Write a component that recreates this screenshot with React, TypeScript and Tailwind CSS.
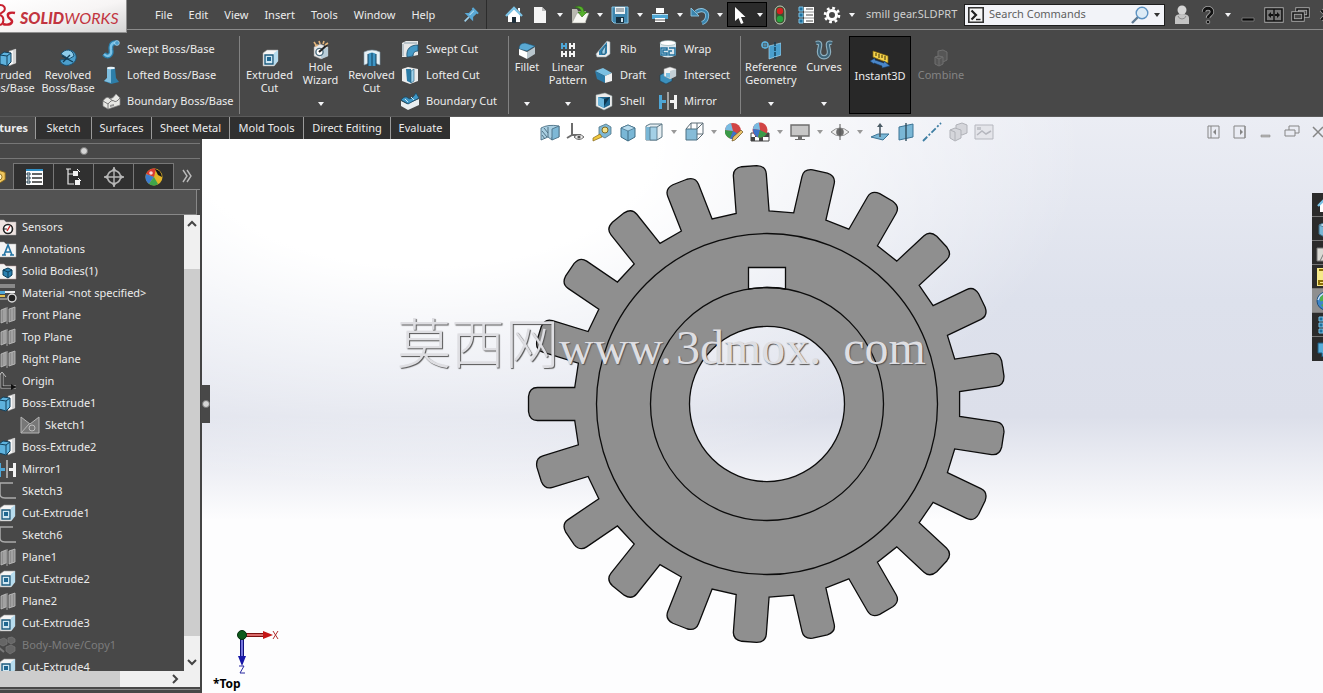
import type { ReactNode } from 'react';

const ICONS: Record<string, ReactNode> = {
  pin: (
    <g transform="rotate(45 10 10)">
      <path d="M6 3h8v2h-1v5l3 3H4l3-3V5H6z" fill="#5aa9d6" />
      <path d="M10 13v6" stroke="#9fd0ea" strokeWidth="1.6" />
      <path d="M9 5v6" stroke="#bfe2f3" />
    </g>
  ),
  home: (
    <>
      <path d="M4 9v8h12V9l-6-5z" fill="#fff" />
      <path d="M2 11l8-8 8 8" fill="none" stroke="#7cc3e6" strokeWidth="2.4" />
      <path d="M8 18v-6h4v6z" fill="#1f2f3a" />
      <path d="M14 3h2v4l-2-2z" fill="#fff" />
    </>
  ),
  page: (
    <>
      <path d="M4 2h8l4 4v12H4z" fill="#f4f4f4" />
      <path d="M12 2v4h4z" fill="#b8b8b8" />
    </>
  ),
  open: (
    <>
      <path d="M2 18V4h5l1 2h8v12z" fill="#b9b9b0" />
      <path d="M2 18l5-10h12l-4 10z" fill="#f7f7f2" stroke="#8d8d85" strokeWidth=".5" />
      <path d="M5 2c5-2 9 0 9 5h3l-5 5-4-5h3c0-3-2-4-6-5z" fill="#56b02c" stroke="#2c6d10" strokeWidth=".6" />
    </>
  ),
  save: (
    <>
      <path d="M2 2h16v16H4l-2-2z" fill="#3f86ae" stroke="#85c3e2" />
      <path d="M5 2h10v7H5z" fill="#eef4f7" />
      <path d="M6 4h8M6 6h8" stroke="#5b6b75" />
      <path d="M6 12h8v6H6z" fill="#17303f" />
      <path d="M11 13h2v4h-2z" fill="#cfe4ee" />
    </>
  ),
  print: (
    <>
      <path d="M6 3h8v5H6z" fill="#fff" />
      <path d="M2 9h16v5H2z" fill="#4fa7d4" />
      <path d="M2 9h16v1H2z" fill="#b7ddf0" />
      <path d="M5 13h10v4H5z" fill="#fff" />
      <path d="M5 15h10" stroke="#555" />
    </>
  ),
  undo: (
    <>
      <path d="M6 7c6-4 12-1 11 5-.4 3-2 5-5 6" fill="none" stroke="#8fc6e2" strokeWidth="4" />
      <path d="M1 3v8h8z" fill="#3c85ad" stroke="#8fc6e2" strokeWidth=".9" />
      <path d="M6 7c6-4 12-1 11 5-.4 3-2 5-5 6" fill="none" stroke="#3c85ad" strokeWidth="2.4" />
    </>
  ),
  cursor: <path d="M5 2v14l3.500-3 2.500 6 2.500-1-2.500-6h4.500z" fill="#fff" />,
  traffic: (
    <>
      <rect x="5" y="1" width="10" height="18" rx="5" fill="#3c5030" stroke="#c3ccb8" />
      <circle cx="10" cy="6" r="3.200" fill="#d42121" />
      <circle cx="10" cy="14" r="3.200" fill="#27a33c" />
    </>
  ),
  options: (
    <>
      <path d="M8 2h10v16H8z" fill="#fff" />
      <path d="M3 2h4v4H3zM3 8h4v4H3zM3 14h4v4H3z" fill="#1f6f9c" stroke="#7cc3e6" />
      <path d="M10 4h7M10 10h7M10 16h7" stroke="#444" />
      <path d="M8 7h10M8 13h10" stroke="#777" strokeWidth=".8" />
    </>
  ),
  gear: (
    <>
      <circle cx="10" cy="10" r="4.500" fill="none" stroke="#fff" strokeWidth="3" />
      <circle cx="10" cy="10" r="7" fill="none" stroke="#fff" strokeWidth="2.600" strokeDasharray="2.750 2.750" />
    </>
  ),
  command: (
    <>
      <path d="M2 2h16v16H2z" fill="#f5f5f5" stroke="#333" strokeWidth="1.800" />
      <path d="M5 5l5 5-5 5" fill="none" stroke="#222" strokeWidth="2.400" />
      <path d="M10 15h5" stroke="#222" strokeWidth="1.600" />
    </>
  ),
  lens: (
    <>
      <path d="M8 12l-6 6" stroke="#5f7a92" strokeWidth="2.400" />
      <circle cx="12" cy="8" r="5.800" fill="#ddebf6" stroke="#5c92c2" strokeWidth="1.400" />
    </>
  ),
  user: (
    <>
      <circle cx="10" cy="5" r="4.500" fill="#d5d5d5" />
      <path d="M3 13q0-4 7-4t7 4v6H3z" fill="#c4c4c4" />
      <path d="M6 11q1 3 4 3t4-3" fill="none" stroke="#8b8b8b" />
    </>
  ),
  help: (
    <>
      <path d="M6 7c0-5 8-5 8 0 0 3-4 3-4 6" fill="none" stroke="#a5a5a5" strokeWidth="4.400" />
      <circle cx="10" cy="17" r="1.800" fill="#111" stroke="#a5a5a5" strokeWidth=".8" />
      <path d="M6 7c0-5 8-5 8 0 0 3-4 3-4 6" fill="none" stroke="#111" strokeWidth="2.800" />
    </>
  ),
  minimize: <path d="M4 13h12v3H4z" fill="#050505" stroke="#8d8d8d" strokeWidth=".7" />,
  span: (
    <>
      <path d="M2 4h16v12H2z" fill="none" stroke="#a8a8a8" strokeWidth="3.400" />
      <path d="M2 4h16v12H2z" fill="#777" stroke="#111" strokeWidth="1.600" />
      <path d="M10 4v12" stroke="#111" strokeWidth="1.400" />
      <path d="M4 10l3-3v2h2v2H7v2zM16 10l-3-3v2h-2v2h2v2z" fill="#111" />
    </>
  ),
  restore: (
    <>
      <path d="M7 4h11v7H7z" fill="#484848" stroke="#a8a8a8" strokeWidth="3.400" />
      <path d="M7 4h11v7H7z" fill="none" stroke="#111" strokeWidth="1.600" />
      <path d="M3 8h10v7H3z" fill="#484848" stroke="#a8a8a8" strokeWidth="3.400" />
      <path d="M3 8h10v7H3z" fill="none" stroke="#111" strokeWidth="1.600" />
    </>
  ),
  close: (
    <>
      <path d="M5 5l10 10M15 5L5 15" stroke="#a0a0a0" strokeWidth="3.400" />
      <path d="M5 5l10 10M15 5L5 15" stroke="#111" strokeWidth="2" />
    </>
  ),
  extrude: (
    <>
      <path d="M11 3l7-2v14l-7 3z" fill="#f6f6f6" stroke="#888" strokeWidth=".5" />
      <path d="M15 2l3-1v14l-3 1z" fill="#d5d5d5" />
      <path d="M2 7l4-3 7 1v9l-4 4-7-2z" fill="#5eb2dd" stroke="#12405c" />
      <path d="M2 7l7 1v9M9 8l4-3" fill="none" stroke="#12405c" />
    </>
  ),
  revolve: (
    <>
      <path d="M10 2c9 0 11 10 4 14-5 3-11 1-12-4l8-1z" fill="#4c9fcd" stroke="#1b5476" />
      <path d="M3 6c4-6 12-5 13 2l-5 3z" fill="#8dcbea" stroke="#1b5476" />
      <path d="M4 8l11 6M5 14l7-7" stroke="#123d57" strokeWidth="1.400" />
    </>
  ),
  sweep: (
    <>
      <path d="M3 15c4 4 8 1 7-4-1-6 2-8 6-7" fill="none" stroke="#2b7fab" strokeWidth="5" />
      <path d="M3 15c4 4 8 1 7-4-1-6 2-8 6-7" fill="none" stroke="#7bc2e6" strokeWidth="2.400" />
      <circle cx="16" cy="4" r="2.400" fill="#4c9cc9" stroke="#c5e4f3" strokeWidth=".6" />
    </>
  ),
  loft: (
    <>
      <path d="M6 3h8l1 10 3 4-8 2-7-3 3-3z" fill="#2d7ea9" />
      <path d="M6 3h4v15l-7-2 3-3z" fill="#7fbfe0" />
      <ellipse cx="10" cy="3" rx="4" ry="1.200" fill="#e5f3fa" />
    </>
  ),
  boundary: (
    <>
      <path d="M2 10q3-5 6-3t7-4l4 4v7L7 18l-5-3z" fill="#e7e7e4" stroke="#8b8b8b" strokeWidth=".7" />
      <path d="M2 10l5 3v5M7 13q4-5 6-3t6-3M8 7l4 3" fill="none" stroke="#777" />
      <path d="M9 14l4-1v2l-4 1z" fill="#999" />
    </>
  ),
  cut: (
    <>
      <path d="M3 5l4-3h11v11l-4 5H3z" fill="#f6f6f6" stroke="#9b9b9b" strokeWidth=".6" />
      <path d="M14 5l4-3v11l-4 5z" fill="#b7dcee" />
      <path d="M5 7h8v9H5z" fill="#cfe7f3" stroke="#1c5b7e" strokeWidth="1.400" />
      <path d="M7 9h4v4H7z" fill="#1f6791" />
    </>
  ),
  wizard: (
    <>
      <path d="M3 7l6-3 8 3v9l-7 3-7-3z" fill="#e8e8e8" stroke="#999" strokeWidth=".5" />
      <path d="M10 10l7-3v9l-7 3z" fill="#b9cdd8" />
      <circle cx="8.500" cy="12" r="3.600" fill="#fff" stroke="#4b6c7e" strokeWidth="1.400" />
      <path d="M8 12l8-7" stroke="#222" strokeWidth="2.200" />
      <path d="M3 2l2 3M8 1l1 3M13 1l-1 3M17 3l-3 2M4 6l3-1" stroke="#e3b57c" strokeWidth="1.600" />
    </>
  ),
  revcut: (
    <>
      <path d="M2 4q8-4 16 0v13q-8-4-16 0z" fill="#e6f0f5" stroke="#7e99a7" strokeWidth=".6" />
      <path d="M6 6q4-3 8 0v12H6z" fill="#3d94c4" />
      <path d="M10 5v13M6 6v12M14 6v12" stroke="#12405c" />
    </>
  ),
  sweepcut: (
    <>
      <path d="M2 4l4-2h12v14l-9 2H2z" fill="#e8e8e8" />
      <path d="M7 18C6 10 10 6 18 6v6q-5 0-5 5z" fill="#4599c6" stroke="#174b69" strokeWidth=".8" />
      <path d="M3 5v12M4 4h13" stroke="#8ba0ac" />
    </>
  ),
  loftcut: (
    <>
      <path d="M2 4l6-2 10 2v12l-8 3-8-3z" fill="#ececec" />
      <path d="M6 4h5v14l-4-2z" fill="#2b7ba6" />
      <path d="M11 6l3-2v12l-3 2z" fill="#9fd2ec" stroke="#1e5775" strokeWidth=".6" />
    </>
  ),
  boundcut: (
    <>
      <path d="M1 10l6 3 12-5v6L8 19l-7-4z" fill="#e9eef1" />
      <path d="M1 9q4-5 7-2t8-5l3 5-11 6z" fill="#3f97c6" stroke="#174a66" strokeWidth=".8" />
      <path d="M5 8l3 3M11 6l3 3" stroke="#cce8f6" />
    </>
  ),
  fillet: (
    <>
      <path d="M2 9q0-6 6-6l10 3-8 5z" fill="#5aa9d3" stroke="#1d5577" strokeWidth=".6" />
      <path d="M2 9l8 3v7l-8-4z" fill="#fff" />
      <path d="M10 12l8-5v7l-8 5z" fill="#b9c6cd" />
    </>
  ),
  linear: (
    <>
      <path d="M11 3h2v2h2V3h2v6h-2V7h-2v2h-2zM3 11h2v2h2v-2h2v6H7v-2H5v2H3zM11 11h2v2h2v-2h2v6h-2v-2h-2v2h-2z" fill="#f3f3f3" />
      <path d="M3 3h2v2h2V3h2v6H7V7H5v2H3z" fill="#4ea6d6" />
    </>
  ),
  rib: (
    <>
      <path d="M13 2l3 1v12l-4 3H3l-1-3z" fill="#eee" stroke="#98a7b0" strokeWidth=".6" />
      <path d="M13 3l-8 9v4h6l2-2z" fill="#2f83b0" />
      <path d="M12 6l-4 6v3h3z" fill="#9fd3ec" stroke="#183f57" strokeWidth=".6" />
    </>
  ),
  draft: (
    <>
      <path d="M1 6l8-3 9 5-7 3z" fill="#7cc0e2" />
      <path d="M1 6l10 5v7L3 14z" fill="#2c7aa6" />
      <path d="M11 11l7-3v8l-7 2z" fill="#f2f2f2" />
    </>
  ),
  shell: (
    <>
      <path d="M2 4l9-2 7 3v10l-8 4-8-4z" fill="#ececec" stroke="#9aa" strokeWidth=".5" />
      <path d="M4 6l12 0v8l-6 3-6-3z" fill="#1f6791" />
      <path d="M4 6l6 2v9l-6-3z" fill="#6bb6dc" />
      <path d="M10 8l6-2-6 9z" fill="#0f3850" />
    </>
  ),
  wrap: (
    <>
      <path d="M2 4v12q8 5 16 0V4z" fill="#d9e6ed" />
      <ellipse cx="10" cy="4" rx="8" ry="2.500" fill="#fff" stroke="#8aa" strokeWidth=".6" />
      <path d="M3 9h6v2H5v3h4v2H3zM11 9h6v7h-6v-4h3" fill="none" stroke="#22719d" strokeWidth="1.500" />
    </>
  ),
  intersect: (
    <>
      <path d="M2 10l4-2 8 4v4l-6 3-6-3z" fill="#3c90bd" stroke="#153f59" strokeWidth=".6" />
      <path d="M6 4l6-2 6 2v7l-6 3-6-3z" fill="#f2f2f2" stroke="#999" strokeWidth=".5" />
      <path d="M12 6l6-2v7l-6 3z" fill="#c3ced4" />
      <path d="M8 8h4v5l-4-1z" fill="#7cc0e2" />
    </>
  ),
  mirror: (
    <>
      <path d="M1 4h3v5h4v3H4v6H1z" fill="#4ea6d6" />
      <path d="M19 4h-3v5h-4v3h4v6h3z" fill="#f2f2f2" />
      <path d="M10 1v18" stroke="#c9c9c9" strokeWidth="1.400" />
    </>
  ),
  reference: (
    <>
      <circle cx="4" cy="5" r="3" fill="none" stroke="#5cb0db" strokeWidth="1.500" />
      <path d="M4 1v8M0 5h8" stroke="#5cb0db" strokeWidth=".8" />
      <path d="M8 6l12-3v12L8 19z" fill="#4a9fcd" stroke="#a4d5ee" strokeWidth=".7" />
      <path d="M14 2v17" stroke="#123a52" strokeWidth="1.400" strokeDasharray="4 1" />
    </>
  ),
  curves: (
    <>
      <path d="M2 3c7-2 3 5 3 9 0 7 10 7 10 0 0-4-4-11 3-9" fill="none" stroke="#8fb1c1" strokeWidth="4.400" />
      <path d="M2 3c7-2 3 5 3 9 0 7 10 7 10 0 0-4-4-11 3-9" fill="none" stroke="#3d6377" strokeWidth="2.200" />
    </>
  ),
  instant: (
    <>
      <path d="M3 2l15 5v7L3 8z" fill="#f3d24c" stroke="#8b6c0d" strokeWidth=".7" />
      <path d="M6 4v3M9 5v4M12 6v3M15 7v4" stroke="#3a2f05" />
      <path d="M0 12l5-3v2l9 3v-2l6 5-8 2v-2l-8-3v1z" fill="#4a86c8" stroke="#163962" strokeWidth=".6" />
    </>
  ),
  combine: (
    <g stroke="#6f6f6f" fill="#565656">
      <path d="M7 3l5-1 4 2v8l-4 2-5-2z" />
      <path d="M4 9l4-1 4 1v7l-4 2-4-2z" />
      <path d="M4 9l4 2v7M8 11l4-2" />
    </g>
  ),
  section: (
    <>
      <path d="M1 6q7-4 18-2v11q-4-2-7 0v3l-4-3-7 3z" fill="#a9cfe2" stroke="#4c7186" strokeWidth=".9" />
      <path d="M12 7l7-3v11l-7 3z" fill="#7eb8d6" stroke="#4c7186" strokeWidth=".9" />
      <path d="M8 5v10M2 9l5 6M2 13l3 4M4 6l4 5" stroke="#46687b" strokeWidth=".9" />
    </>
  ),
  previous: (
    <>
      <path d="M6 1v12h9M6 13l-5 3" fill="none" stroke="#6d6d6d" strokeWidth="2" />
      <path d="M8 15q5-5 10 0-5 5-10 0z" fill="#eee" stroke="#666" />
      <circle cx="13" cy="15" r="1.600" fill="#555" />
    </>
  ),
  measure: (
    <>
      <path d="M7 5l7-3 5 3v7l-6 4-6-3z" fill="#7fb8d5" stroke="#4f7486" strokeWidth=".8" />
      <circle cx="13" cy="8" r="3" fill="#f7e38a" stroke="#7c6a28" />
      <path d="M8 12l-7 4v3l9-4z" fill="#f0c73d" stroke="#84671a" strokeWidth=".7" />
    </>
  ),
  cube: (
    <>
      <path d="M3 6l7-3 7 3v9l-7 4-7-4z" fill="#7ab7d6" stroke="#3f6c84" />
      <path d="M3 6l7 3 7-3-7-3z" fill="#b6dbed" stroke="#3f6c84" strokeWidth=".7" />
      <path d="M10 9v10" stroke="#3f6c84" />
    </>
  ),
  orient: (
    <>
      <path d="M2 4l4-2h12v13l-5 3H2z" fill="#e6eef2" stroke="#5d7886" />
      <path d="M2 5h4v13H2z" fill="#7ab7d6" />
      <path d="M6 5h7v13H6z" fill="#a4d0e6" stroke="#4c7083" strokeWidth=".8" />
      <path d="M13 5l5-3" stroke="#5d7886" />
    </>
  ),
  display: (
    <>
      <path d="M2 7h11v11H2z" fill="#86bcd8" stroke="#4c7083" />
      <path d="M2 7l5-6h12v11l-6 6M13 7l6-6M7 1v6M13 7V1M13 12h6" fill="none" stroke="#5d6d76" />
    </>
  ),
  appearance: (
    <>
      <circle cx="9" cy="9" r="8" fill="#d24545" />
      <path d="M9 9L1 8a8 8 0 0 0 5 8.500z" fill="#3a9a48" />
      <path d="M9 9l-3 7.500A8 8 0 0 0 16 13z" fill="#3b74c9" />
      <path d="M9 9L1 8a8 8 0 0 1 6-7z" fill="#79bce2" />
      <path d="M9 15l8-7 2 2-8 8-3 1z" fill="#e8c26b" stroke="#6d5321" strokeWidth=".7" />
    </>
  ),
  scene: (
    <>
      <path d="M1 11h18v8H1z" fill="#fff" stroke="#444" />
      <path d="M1 15h4v4H1zM5 11h4v4H5zM9 15h4v4H9zM13 11h6v4h-6z" fill="#444" />
      <circle cx="10" cy="8" r="7.500" fill="#d24545" />
      <path d="M10 8L3 7a7 7 0 0 1 6-6.500z" fill="#79bce2" />
      <path d="M10 8L3 7q0 6 5 8.500z" fill="#3b74c9" />
      <path d="M10 8l-2 7.500q6 1 9-4z" fill="#3a9a48" />
    </>
  ),
  monitor: (
    <>
      <path d="M1 3h18v11H1z" fill="#c7c7c7" stroke="#6d6d6d" strokeWidth="1.400" />
      <path d="M8 14h4v3H8zM5 17h10v1H5z" fill="#6d6d6d" />
    </>
  ),
  eye: (
    <>
      <path d="M1 10q9-8 18 0-9 8-18 0z" fill="#efefef" stroke="#8d8d8d" />
      <circle cx="10" cy="10" r="3.800" fill="#6a6a6a" />
      <path d="M10 2v16" stroke="#555" />
    </>
  ),
  normal: (
    <>
      <path d="M1 15l7-3h11l-6 6z" fill="#7ab7d6" stroke="#3d7495" />
      <path d="M10 15V4" stroke="#4b5b65" strokeWidth="1.600" />
      <path d="M7 5l3-4 3 4z" fill="#4b5b65" />
    </>
  ),
  plane: (
    <>
      <path d="M3 5l14-3v13L3 18z" fill="#7ab7d6" stroke="#3d7495" />
      <path d="M10 1v18" stroke="#2e4d5e" strokeWidth="1.400" />
    </>
  ),
  axis: <path d="M1 19L19 1" stroke="#3f7fa3" strokeWidth="1.800" strokeDasharray="6 2 2 2" />,
  ghost: (
    <g fill="#d5d6db" stroke="#b0b2b8">
      <path d="M8 3l6-2 5 2v8l-5 2-6-2z" />
      <path d="M2 8l5-2 6 2v8l-6 3-5-3z" />
      <path d="M2 8l5 2v8" />
    </g>
  ),
  picture: (
    <>
      <path d="M1 3h18v14H1z" fill="#e4e5ea" stroke="#b5b7be" />
      <path d="M3 13l5-4 4 3 5-3" fill="none" stroke="#b5b7be" strokeWidth="1.500" />
      <path d="M3 5h4v3H3z" fill="#c3c5cb" />
    </>
  ),
  paneLeft: (
    <>
      <path d="M4 4h11v12H4zM7 4v12" fill="none" stroke="#858585" />
      <path d="M12 7l-3 3 3 3z" fill="#858585" />
    </>
  ),
  paneRight: (
    <>
      <path d="M4 4h11v12H4zM15 4v12" fill="none" stroke="#858585" />
      <path d="M10 7l3 3-3 3z" fill="#858585" />
    </>
  ),
  docMin: <path d="M5 13h9v2H5z" fill="#b5b5b5" stroke="#8f8f8f" strokeWidth=".6" />,
  docRestore: <path d="M7 8V4h10v7h-4M3 8h10v6H3z" fill="none" stroke="#858585" />,
  docClose: <path d="M5 5l10 10M15 5L5 15" stroke="#858585" strokeWidth="1.500" />,
  part: (
    <>
      <path d="M3 7l6-4 9 3v8l-8 5-7-4z" fill="#f0c75e" stroke="#8b6a1b" />
      <circle cx="11" cy="11" r="3.500" fill="#fff3c4" stroke="#8b6a1b" />
    </>
  ),
  property: (
    <>
      <path d="M2 2h17v16H2z" fill="#fff" />
      <path d="M2 2h17v2H2z" fill="#2f8fc4" />
      <path d="M3 6h3v2H3zM3 10h3v2H3zM3 14h3v2H3z" fill="#fff" stroke="#1d3b4d" />
      <path d="M8 7h10M8 11h10M8 15h10" stroke="#333" strokeWidth="1.400" />
    </>
  ),
  config: (
    <>
      <path d="M4 2v15h6M4 7h6M2 2h5" fill="none" stroke="#e9e9e9" strokeWidth="1.200" />
      <path d="M9 4h5v5H9zM11 13h5v5h-5z" fill="#f4f4f4" />
      <path d="M13 2l3 3M14 11l3 3" stroke="#fff" />
    </>
  ),
  target: (
    <>
      <circle cx="10" cy="10" r="6.500" fill="none" stroke="#b7b7b7" strokeWidth="1.600" />
      <path d="M10 0v20M0 10h20" stroke="#b7b7b7" strokeWidth="1.400" />
      <path d="M10 0l2 3H8zM10 20l2-3H8zM0 10l3-2v4zM20 10l-3-2v4z" fill="#b7b7b7" />
    </>
  ),
  ball: (
    <>
      <circle cx="10" cy="10" r="8.500" fill="#e2b428" />
      <path d="M10 10L2 7a8.500 8.500 0 0 1 10-5.300z" fill="#d93a32" />
      <path d="M10 10L2 7q-2 6 3 10z" fill="#3c7ccf" />
      <path d="M10 10l-5 7q5 3 9 0z" fill="#3fa54b" />
      <path d="M11 2q6 1 7 8l-4-2z" fill="#161616" />
      <circle cx="7" cy="6" r="1.800" fill="#fff" opacity=".8" />
    </>
  ),
  sensors: (
    <>
      <path d="M0 3h7l2 2h10v13H0z" fill="#efe4e1" stroke="#aaa" strokeWidth=".5" />
      <circle cx="11" cy="12" r="4.500" fill="#fff" stroke="#222" strokeWidth="1.600" />
      <path d="M10 14l3-5" stroke="#c22" strokeWidth="1.400" />
      <path d="M7 12h3" stroke="#222" />
    </>
  ),
  annotations: (
    <>
      <path d="M0 3h7l2 2h10v13H0z" fill="#f4f4f4" stroke="#aaa" strokeWidth=".5" />
      <path d="M7 16l4-10 4 10M8.500 13h5M5 16h4M13 16h4" fill="none" stroke="#2273a3" strokeWidth="1.600" />
    </>
  ),
  bodies: (
    <>
      <path d="M0 3h7l2 2h10v13H0z" fill="#f4f4f4" stroke="#b99" strokeWidth=".5" />
      <path d="M6 9l5-2 4 2v5l-4 3-5-3z" fill="#2b80b0" stroke="#0d3c58" />
      <path d="M6 9l5 2 4-2M11 11v5" fill="none" stroke="#0d3c58" />
    </>
  ),
  material: (
    <>
      <path d="M0 2h18M0 4h18M0 16h10" stroke="#c9c9c9" strokeWidth="1.200" />
      <path d="M0 8h8v3H0z" fill="#4ea6d6" />
      <path d="M0 13h8" stroke="#e5c14b" strokeWidth="2" />
      <path d="M8 9h10" stroke="#eee" strokeWidth="2" />
      <circle cx="15" cy="15" r="4" fill="#222" stroke="#ddd" strokeWidth="1.400" />
    </>
  ),
  treePlane: (
    <>
      <path d="M4 5l5-2v13l-5 2zM12 4l6-2v13l-6 2z" fill="#8d8d8d" stroke="#c0c0c0" strokeWidth=".8" />
      <path d="M7 4v13M10 2v17M15 3v13" stroke="#c0c0c0" strokeWidth=".8" />
    </>
  ),
  origin: (
    <>
      <path d="M5 2v14h14" fill="none" stroke="#bbb" strokeWidth="3" />
      <path d="M5 2v14h14" fill="none" stroke="#222" strokeWidth="1.400" />
      <path d="M14 13l5 3-5 3z" fill="#111" />
      <path d="M1 6l4-5 4 5" fill="none" stroke="#bbb" />
    </>
  ),
  sketchSolid: (
    <>
      <path d="M1 2l9 7 9-7v16H1z" fill="#777" stroke="#b5b5b5" />
      <circle cx="12" cy="13" r="3" fill="none" stroke="#bbb" />
      <path d="M1 18l8-9" stroke="#b5b5b5" />
    </>
  ),
  sketch: <path d="M16 2H3v11q0 4 5 4h11" fill="none" stroke="#aaa" strokeWidth="1.500" />,
  move: (
    <g fill="#666" stroke="#7a7a7a" strokeWidth=".7">
      <path d="M2 5l5-2 3 2v4l-4 2-4-2zM11 3l4-1 3 2v3l-4 2-3-2zM9 12l5-2 4 2v4l-5 3-4-3z" />
      <path d="M1 12l6 5" strokeWidth="2" />
    </g>
  ),
  folder: <path d="M1 18V5h6l2 2h11v11zM4 18l4-8h12" fill="#d9d9d4" stroke="#777" />,
  palette: (
    <>
      <path d="M1 1h18v18H1z" fill="#f6e98a" />
      <path d="M3 3h10v5H8v4h9v5H3v-3h5" fill="none" stroke="#8b6f0a" strokeWidth="2" />
    </>
  ),
  globe: (
    <>
      <circle cx="10" cy="10" r="9" fill="#3d86c9" stroke="#1d4c7c" />
      <path d="M4 6q5-5 7-2t-2 5-5 1zM5 14q5-3 8 1l-3 4z" fill="#4fae4f" />
      <path d="M2 9q2-6 7-7" fill="none" stroke="#c7e2f5" strokeWidth="1.400" />
    </>
  ),
  forum: <path d="M2 4h17v10h-9l-4 4v-4H2z" fill="#58aedb" stroke="#205d80" />,
};

function Icon({ name, small = false }: { name: string; small?: boolean }) {
  return (
    <svg viewBox="0 0 20 20" className={small ? 'size-[18px] shrink-0' : 'size-5 shrink-0'} aria-hidden="true">
      {ICONS[name]}
    </svg>
  );
}

function Caret({ className = 'text-gray-100' }: { className?: string }) {
  return (
    <svg viewBox="0 0 6 4" className={`h-1 w-1.5 ${className}`} aria-hidden="true">
      <path d="M0 0h6L3 4z" fill="currentColor" />
    </svg>
  );
}

/* "v" stands for the drop-down arrow that follows a tool */
function Tools({ items, caret }: { items: string[]; caret?: string }) {
  return (
    <div className="flex h-full shrink-0 items-center">
      {items.map((item, i) =>
        item === 'v' ? (
          <button key={i} aria-label={`${items[i - 1]} menu`} className="flex h-6 w-3.5 items-center justify-center">
            <Caret className={caret} />
          </button>
        ) : (
          <button key={i} aria-label={item} className="flex h-6 w-[26px] items-center justify-center">
            <Icon name={item} />
          </button>
        ),
      )}
    </div>
  );
}

const MENUS = ['File', 'Edit', 'View', 'Insert', 'Tools', 'Window', 'Help'];

function TitleBar() {
  return (
    <div className="relative flex h-[30px] items-center border-b border-[#8a8a8a] pl-[147px]">
      <div className="absolute top-0 left-0 z-10 flex h-[33px] w-[127px] items-center border-r border-b border-[#8f8f8f] bg-linear-to-br from-white via-[#f7f5f5] to-[#d4d4d4]">
        <svg viewBox="0 0 16 26" className="h-[26px] w-4 shrink-0" fill="none" stroke="#c8202f" aria-hidden="true">
          <path d="M0 2c4 0 6 3 4 6l-4 3M0 12c5 2 4 9 0 10" strokeWidth="2" />
          <path d="M15 10c-4-1-8 0-7 3 0 3 5 3 4 6-1 3-6 3-9 2" strokeWidth="2.400" />
        </svg>
        <span className="mt-1 ml-1 font-['Lato'] text-[16px] leading-5 text-[#c23540] italic">
          <b className="font-black">SOLID</b>WORKS
        </span>
      </div>
      <nav className="flex w-[312px] shrink-0">
        {MENUS.map((m) => (
          <button key={m} className="px-2 leading-5">
            {m}
          </button>
        ))}
      </nav>
      <div className="-ml-0.5 flex h-full w-[30px] shrink-0 items-center border-r border-[#2c2c2c]">
        <button aria-label="pin" className="ml-1">
          <Icon name="pin" />
        </button>
      </div>
      <div className="ml-3.5 flex h-full shrink-0">
        <Tools items={['home', 'page', 'v', 'open', 'v', 'save', 'v', 'print', 'v', 'undo', 'v']} />
        <div className="my-0.5 border border-black bg-[#2b2b2b]">
          <div className="-mx-px h-full">
            <Tools items={['cursor', 'v']} />
          </div>
        </div>
        <Tools items={['traffic', 'options', 'gear', 'v']} />
      </div>
      <span className="ml-[7px] w-[98px] shrink-0 whitespace-nowrap text-[#d0d0d0]">smill gear.SLDPRT</span>
      <label className="flex h-[22px] min-w-0 max-w-[201px] flex-1 items-center border border-[#1d1d1d] bg-[#f2f3f8] pl-0.5">
        <Icon name="command" small />
        <input
          aria-label="Search Commands"
          placeholder="Search Commands"
          className="ml-1 w-0 min-w-0 flex-1 bg-transparent outline-none placeholder:text-[#5f5f5f]"
        />
        <Icon name="lens" />
        <span className="px-1">
          <Caret className="text-[#333]" />
        </span>
      </label>
      <div className="-mr-4 ml-auto h-full">
        <Tools items={['user', 'help', 'v', 'minimize', 'span', 'restore', 'close']} />
      </div>
    </div>
  );
}

interface BigToolProps {
  icon: string;
  label: string;
  width: string;
  menu?: boolean;
  className?: string;
}

function BigTool({ icon, label, width, menu, className = '' }: BigToolProps) {
  return (
    <button
      className={`flex h-[78px] shrink-0 flex-col items-center leading-[13px] ${menu ? 'pt-1' : 'pt-3'} ${width} ${className}`}
    >
      <Icon name={icon} />
      <span className="whitespace-pre-line">{label}</span>
      {menu && (
        <span className="mt-auto mb-2">
          <Caret />
        </span>
      )}
    </button>
  );
}

function ToolList({ items, width }: { items: [string, string][]; width: string }) {
  return (
    <div className={`flex shrink-0 flex-col pl-[3px] ${width}`}>
      {items.map(([icon, label]) => (
        <button key={label} className="flex h-[26px] items-center gap-1.5 whitespace-nowrap">
          <Icon name={icon} />
          {label}
        </button>
      ))}
    </div>
  );
}

function Ribbon() {
  return (
    <div className="flex h-[87px] items-start border-b border-[#5a5a5a] pt-1.5">
      <div className="flex border-r border-[#828282]">
        <BigTool icon="extrude" label={'Extruded\nBoss/Base'} width="w-[60px]" className="-ml-[22px]" />
        <BigTool icon="revolve" label={'Revolved\nBoss/Base'} width="w-[60px]" />
        <ToolList
          width="w-[141px]"
          items={[
            ['sweep', 'Swept Boss/Base'],
            ['loft', 'Lofted Boss/Base'],
            ['boundary', 'Boundary Boss/Base'],
          ]}
        />
      </div>
      <div className="flex border-r border-[#828282] pl-1">
        <BigTool icon="cut" label={'Extruded\nCut'} width="w-[51px]" />
        <BigTool icon="wizard" label={'Hole\nWizard'} width="w-[51px]" menu />
        <BigTool icon="revcut" label={'Revolved\nCut'} width="w-[51px]" />
        <ToolList
          width="w-[111px]"
          items={[
            ['sweepcut', 'Swept Cut'],
            ['loftcut', 'Lofted Cut'],
            ['boundcut', 'Boundary Cut'],
          ]}
        />
      </div>
      <div className="flex border-r border-[#828282]">
        <BigTool icon="fillet" label="Fillet" width="w-9" menu />
        <BigTool icon="linear" label={'Linear\nPattern'} width="w-[46px]" menu />
        <ToolList
          width="w-16"
          items={[
            ['rib', 'Rib'],
            ['draft', 'Draft'],
            ['shell', 'Shell'],
          ]}
        />
        <ToolList
          width="w-[85px]"
          items={[
            ['wrap', 'Wrap'],
            ['intersect', 'Intersect'],
            ['mirror', 'Mirror'],
          ]}
        />
      </div>
      <BigTool icon="reference" label={'Reference\nGeometry'} width="w-[60px]" menu />
      <BigTool icon="curves" label="Curves" width="w-[46px]" menu />
      <BigTool icon="instant" label="Instant3D" width="w-[62px]" className="ml-0.5 border border-black bg-[#282828]" />
      <BigTool icon="combine" label="Combine" width="w-[60px]" className="text-[#848484]" />
    </div>
  );
}

const TABS: [string, string][] = [
  ['Sketch', 'w-14'],
  ['Surfaces', 'w-[60px]'],
  ['Sheet Metal', 'w-[78px]'],
  ['Mold Tools', 'w-[74px]'],
  ['Direct Editing', 'w-[87px]'],
  ['Evaluate', 'w-[60px]'],
];

function TabRow() {
  return (
    <div className="flex h-[22px] shrink-0">
      <div className="flex">
        <button className="flex w-[35px] items-center justify-end overflow-hidden bg-[#484848] pr-[7px] font-bold">
          Features
        </button>
        {TABS.map(([label, width]) => (
          <button
            key={label}
            className={`border-l border-[#9a9a9a] bg-[#303030] text-center whitespace-nowrap ${width}`}
          >
            {label}
          </button>
        ))}
      </div>
      <div className="ml-[87px] h-[30px]">
        <Tools
          caret="text-[#999]"
          items={[
            'section', 'previous', 'measure', 'cube', 'orient', 'v', 'display', 'v', 'appearance', 'scene', 'v',
            'monitor', 'v', 'eye', 'v', 'normal', 'plane', 'axis', 'ghost', 'picture',
          ]}
        />
      </div>
      <div className="-mr-2 ml-auto h-[30px]">
        <Tools items={['paneLeft', 'paneRight', 'docMin', 'docRestore', 'docClose']} />
      </div>
    </div>
  );
}

const TREE: [string, string][] = [
  ['sensors', 'Sensors'],
  ['annotations', 'Annotations'],
  ['bodies', 'Solid Bodies(1)'],
  ['material', 'Material <not specified>'],
  ['treePlane', 'Front Plane'],
  ['treePlane', 'Top Plane'],
  ['treePlane', 'Right Plane'],
  ['origin', 'Origin'],
  ['extrude', 'Boss-Extrude1'],
  ['sketchSolid', 'Sketch1'],
  ['extrude', 'Boss-Extrude2'],
  ['mirror', 'Mirror1'],
  ['sketch', 'Sketch3'],
  ['cut', 'Cut-Extrude1'],
  ['sketch', 'Sketch6'],
  ['treePlane', 'Plane1'],
  ['cut', 'Cut-Extrude2'],
  ['treePlane', 'Plane2'],
  ['cut', 'Cut-Extrude3'],
  ['move', 'Body-Move/Copy1'],
  ['cut', 'Cut-Extrude4'],
];

function Dot() {
  return <span className="size-2 rounded-full border border-[#777] bg-[#d5d5d5]" />;
}

function Chevron({ d }: { d: string }) {
  return (
    <svg viewBox="0 0 10 10" className="size-2.5" fill="none" stroke="#444" strokeWidth="2" aria-hidden="true">
      <path d={d} />
    </svg>
  );
}

function FeaturePanel() {
  return (
    <aside className="relative flex w-[202px] shrink-0 flex-col border-r-2 border-[#444] bg-[#484848]">
      <div className="mt-1 flex h-4 items-center justify-center border-y border-[#777] pr-8">
        <Dot />
      </div>
      <div className="mt-1 flex h-[27px] border-b border-[#8a8a8a]">
        <button aria-label="part" className="flex w-[13px] items-center justify-end overflow-hidden pr-1.5">
          <Icon name="part" small />
        </button>
        {['property', 'config', 'target', 'ball'].map((name) => (
          <button
            key={name}
            aria-label={name}
            className="flex w-10 items-center justify-center border-t border-l border-[#777] bg-[#303030]"
          >
            <Icon name={name} />
          </button>
        ))}
        <button aria-label="More tabs" className="flex flex-1 items-center justify-center border-l border-[#777]">
          <svg viewBox="0 0 12 14" className="h-3.5 w-3" fill="none" stroke="#bbb" strokeWidth="1.400" aria-hidden="true">
            <path d="M2 1l4 6-4 6M6 1l4 6-4 6" />
          </svg>
        </button>
      </div>
      <input
        aria-label="Filter"
        className="h-[25px] w-[197px] shrink-0 border-r border-b border-[#888] bg-[#535353] px-1 outline-none"
      />
      <div className="flex min-h-0 flex-1">
        <ul className="min-w-0 flex-1 overflow-hidden pt-px">
          {TREE.map(([icon, label]) => (
            <li key={label} className={icon === 'sketchSolid' ? 'pl-5' : ''}>
              <button
                className={`flex h-[22px] items-center gap-[5px] whitespace-nowrap ${icon === 'move' ? 'text-[#7c7c7c]' : ''} ${icon === 'sketchSolid' ? '' : '-ml-[3px]'}`}
              >
                <Icon name={icon} />
                {label}
              </button>
            </li>
          ))}
        </ul>
        <div className="flex w-4 shrink-0 flex-col bg-[#f0f0f0]">
          <button aria-label="Scroll up" className="flex h-[18px] items-center justify-center">
            <Chevron d="M1 7l4-4 4 4" />
          </button>
          <div className="mt-9 mb-[17px] flex-1 bg-[#cdcdcd]" />
          <button aria-label="Scroll down" className="flex h-[18px] items-center justify-center">
            <Chevron d="M1 3l4 4 4-4" />
          </button>
        </div>
      </div>
      <div className="flex h-4 bg-[#f0f0f0]">
        <div className="w-[120px] bg-[#cdcdcd]" />
        <button aria-label="Scroll right" className="mr-5 ml-auto">
          <Chevron d="M3 1l4 4-4 4" />
        </button>
      </div>
      <div className="mt-0.5 h-1 border-t border-[#888]" />
      <button
        aria-label="Collapse panel"
        className="absolute top-[246px] -right-2.5 flex h-[38px] w-[9px] items-center justify-center bg-[#484848]"
      >
        <Dot />
      </button>
    </aside>
  );
}

const CENTER = 245;
const TEETH = 21;
const HALF_TOOTH = 16.5;
const TIP = 238.5;
const ROOT = 193;
const ROUND = 9;

function gearOutline() {
  const base = Math.sqrt(ROOT * ROOT - HALF_TOOTH * HALF_TOOTH);
  const parts: string[] = [];
  for (let i = 0; i < TEETH; i++) {
    const a = Math.PI + (i * 2 * Math.PI) / TEETH;
    const at = (u: number, v: number) =>
      `${(CENTER + u * Math.cos(a) - v * Math.sin(a)).toFixed(2)} ${(CENTER + u * Math.sin(a) + v * Math.cos(a)).toFixed(2)}`;
    parts.push(
      `${i ? 'L' : 'M'}${at(base, -HALF_TOOTH)}`,
      `L${at(TIP - ROUND, -HALF_TOOTH)}`,
      `Q${at(TIP - 1, -HALF_TOOTH)} ${at(TIP, ROUND - HALF_TOOTH)}`,
      `L${at(TIP, HALF_TOOTH - ROUND)}`,
      `Q${at(TIP - 1, HALF_TOOTH)} ${at(TIP - ROUND, HALF_TOOTH)}`,
      `L${at(base, HALF_TOOTH)}`,
    );
  }
  return `${parts.join('')}Z`;
}

const HOLE = 'M167.500 245a77.500 77.500 0 1 0 155 0a77.500 77.500 0 1 0-155 0z';
const KEYWAY = 'M226.500 130V108.500H263.500V130A116.500 116.500 0 0 0 226.500 130z';

function Viewport() {
  return (
    <section className="relative min-w-0 flex-1 text-black">
      <svg
        viewBox="0 0 490 490"
        className="absolute top-5 left-80 size-[490px]"
        stroke="#0c0c0c"
        strokeWidth="1.300"
        fill="none"
        role="img"
        aria-label="Gear"
      >
        <path d={gearOutline() + HOLE + KEYWAY} fill="#8f8f8f" fillRule="evenodd" />
        <circle cx={CENTER} cy={CENTER} r="170.500" />
        <circle cx={CENTER} cy={CENTER} r="116.500" />
      </svg>

      <p className="pointer-events-none absolute top-[172px] left-[195px] flex items-baseline font-['Liberation_Serif','Noto_Sans_CJK_SC',serif] text-[48px] leading-[70px] font-light whitespace-nowrap text-[#dedee2] [text-shadow:1px_1px_1px_#555]">
        <span className="text-[54px]">莫西网</span>
        <span>www.</span>
        <span className="ml-1">3dmox.</span>
        <span className="ml-[22px]">com</span>
      </p>

      <svg viewBox="0 0 50 50" className="absolute top-[486px] left-[30px] size-[50px]" aria-hidden="true">
        <path d="M10 10h22" stroke="#7b1010" strokeWidth="4" />
        <path d="M10 10h22" stroke="#d96a6a" strokeWidth="2" />
        <path d="M31 6l10 4-10 4z" fill="#c41616" />
        <path d="M10 10v22" stroke="#10107b" strokeWidth="4" />
        <path d="M10 10v22" stroke="#7676dd" strokeWidth="2" />
        <path d="M6 31l4 10 4-10z" fill="#1616a8" />
        <circle cx="10" cy="10" r="4.500" fill="#0d5a1b" stroke="#053010" />
        <path d="M41 6l5 8M46 6l-5 8" stroke="#b03030" />
        <path d="M7 41h5l-4 7h5" fill="none" stroke="#2828a0" />
      </svg>
      <span className="absolute bottom-px left-[11px] text-[12px] leading-4 font-bold">*Top</span>

      <div className="absolute top-[54px] right-0 w-[11px] divide-y divide-[#777] overflow-hidden bg-[#2b2b2b]">
        {['home', 'cube', 'folder', 'palette', 'globe', 'options', 'forum'].map((name) => (
          <button
            key={name}
            aria-label={`${name} pane`}
            className={`flex h-6 w-full items-center pl-1 ${name === 'globe' ? 'bg-[#8f8f8f]' : ''}`}
          >
            <Icon name={name} />
          </button>
        ))}
      </div>
    </section>
  );
}

export default function App() {
  return (
    <div className="flex h-screen flex-col overflow-hidden font-['Noto_Sans','Open_Sans',sans-serif] text-[11px] text-[#ececec]">
      <header className="shrink-0 bg-[#484848]">
        <TitleBar />
        <Ribbon />
      </header>
      <main className="flex min-h-0 flex-1 flex-col bg-[radial-gradient(ellipse_50%_60%_at_32%_5%,#fff_35%,transparent),linear-gradient(to_bottom,#ebedf4_0%,#dde1ec_32%,#dcdfea_52%,#fdfdfe_70%)]">
        <TabRow />
        <div className="flex min-h-0 flex-1">
          <FeaturePanel />
          <Viewport />
        </div>
      </main>
    </div>
  );
}
